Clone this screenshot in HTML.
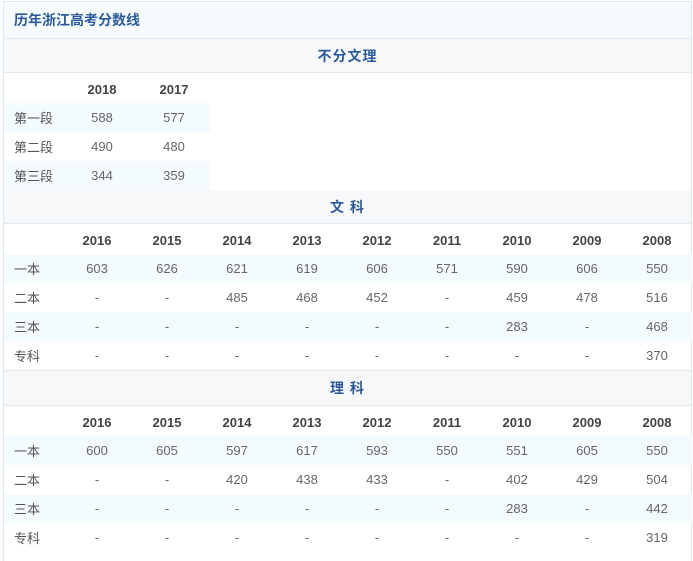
<!DOCTYPE html>
<html><head><meta charset="utf-8"><style>
*{margin:0;padding:0;box-sizing:border-box}
body{width:693px;height:552px;overflow:hidden;background:#fff;font-family:"Liberation Sans","Noto Sans CJK SC",sans-serif;font-size:13px;color:#555}
.wrap{position:absolute;left:3px;top:1px;width:689px;height:560px;border:1px solid #dbe9f0;border-bottom:none}
.title{height:37px;background:#f6fcfe;border-bottom:1px solid #dde8ee;color:#2a5a9a;font-weight:bold;font-size:14px;line-height:36px;padding-left:10px}
.sec{height:34px;background:#f7f8f9;border-bottom:1px solid #e3e8ec;color:#2a5a9a;font-weight:bold;font-size:14px;line-height:34px;text-align:center;letter-spacing:1px}
.sec.b{border-top:1px solid #e3e8ec;height:36px}
table{border-collapse:collapse;table-layout:fixed}
td{height:29px;text-align:center;color:#666}
td.l{text-align:left;padding-left:10px;color:#555}
tr.h td{font-weight:bold;color:#444;height:30px;padding-top:2px}
tr.s td{background:#f3fbfe}
</style></head><body><div class="wrap">
<div class="title">历年浙江高考分数线</div>
<div class="sec">不分文理</div>
<table style="width:206px">
<colgroup><col style="width:62px"><col style="width:72px"><col style="width:72px"></colgroup>
<tr class="h"><td></td><td>2018</td><td>2017</td></tr>
<tr class="s"><td class="l">第一段</td><td>588</td><td>577</td></tr>
<tr><td class="l">第二段</td><td>490</td><td>480</td></tr>
<tr class="s"><td class="l">第三段</td><td>344</td><td>359</td></tr>
</table>
<div class="sec">文 科</div>
<table style="width:687px">
<colgroup><col style="width:58px"><col span="9" style="width:70px"></colgroup>
<tr class="h"><td></td><td>2016</td><td>2015</td><td>2014</td><td>2013</td><td>2012</td><td>2011</td><td>2010</td><td>2009</td><td>2008</td></tr>
<tr class="s"><td class="l">一本</td><td>603</td><td>626</td><td>621</td><td>619</td><td>606</td><td>571</td><td>590</td><td>606</td><td>550</td></tr>
<tr><td class="l">二本</td><td>-</td><td>-</td><td>485</td><td>468</td><td>452</td><td>-</td><td>459</td><td>478</td><td>516</td></tr>
<tr class="s"><td class="l">三本</td><td>-</td><td>-</td><td>-</td><td>-</td><td>-</td><td>-</td><td>283</td><td>-</td><td>468</td></tr>
<tr><td class="l">专科</td><td>-</td><td>-</td><td>-</td><td>-</td><td>-</td><td>-</td><td>-</td><td>-</td><td>370</td></tr>
</table>
<div class="sec b">理 科</div>
<table style="width:687px">
<colgroup><col style="width:58px"><col span="9" style="width:70px"></colgroup>
<tr class="h"><td></td><td>2016</td><td>2015</td><td>2014</td><td>2013</td><td>2012</td><td>2011</td><td>2010</td><td>2009</td><td>2008</td></tr>
<tr class="s"><td class="l">一本</td><td>600</td><td>605</td><td>597</td><td>617</td><td>593</td><td>550</td><td>551</td><td>605</td><td>550</td></tr>
<tr><td class="l">二本</td><td>-</td><td>-</td><td>420</td><td>438</td><td>433</td><td>-</td><td>402</td><td>429</td><td>504</td></tr>
<tr class="s"><td class="l">三本</td><td>-</td><td>-</td><td>-</td><td>-</td><td>-</td><td>-</td><td>283</td><td>-</td><td>442</td></tr>
<tr><td class="l">专科</td><td>-</td><td>-</td><td>-</td><td>-</td><td>-</td><td>-</td><td>-</td><td>-</td><td>319</td></tr>
</table>
</div></body></html>
